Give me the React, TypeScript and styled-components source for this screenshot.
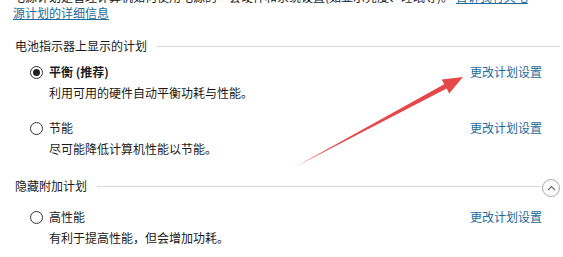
import React from "react";
import styled, { createGlobalStyle } from "styled-components";

const Global = createGlobalStyle`
  html, body { margin: 0; padding: 0; background: #fff; overflow: hidden; }
  body { font-family: "Noto Sans CJK SC", "Noto Sans", sans-serif; font-size: 12px; color: #1a1a1a; }
`;

const Page = styled.div`
  position: relative;
  width: 563px;
  height: 257px;
  overflow: hidden;
`;

const Intro = styled.p`
  margin: -11px 0 0 0;
  padding: 0 0 0 13px;
  line-height: 16px;
  width: 560px;
  white-space: nowrap;
`;

const Link = styled.a<{ $underline?: boolean }>`
  color: #1d6b9a;
  text-decoration: ${(p) => (p.$underline ? "underline" : "none")};
  cursor: pointer;
`;

const Section = styled.section<{ $top: number }>`
  margin-top: ${(p) => p.$top}px;
`;

const Header = styled.div`
  display: flex;
  align-items: center;
  gap: 10px;
  padding-left: 15px;
  padding-right: 3px;
  line-height: 16px;
  height: 16px;
`;

const Rule = styled.div`
  flex: 1;
  height: 1px;
  background: #d9d9d9;
`;

const CollapseButton = styled.div`
  width: 16px;
  height: 16px;
  border: 1px solid #a8a8a8;
  border-radius: 50%;
  display: flex;
  align-items: center;
  justify-content: center;
  margin-left: -9px;
  margin-top: 3px;
  flex-shrink: 0;
`;

const Plan = styled.div<{ $top: number }>`
  margin-top: ${(p) => p.$top}px;
`;

const PlanRow = styled.div`
  display: grid;
  grid-template-columns: 19px 1fr auto;
  align-items: center;
  padding-left: 30px;
  padding-right: 21px;
  line-height: 16px;
  height: 16px;
`;

const Radio = styled.span<{ $checked?: boolean }>`
  width: 11px;
  height: 11px;
  border: 1px solid #333;
  border-radius: 50%;
  display: flex;
  align-items: center;
  justify-content: center;
  &::after {
    content: "";
    width: 7px;
    height: 7px;
    border-radius: 50%;
    background: #222;
    display: ${(p) => (p.$checked ? "block" : "none")};
  }
`;

const PlanName = styled.span<{ $bold?: boolean }>`
  font-weight: ${(p) => (p.$bold ? 700 : 400)};
`;

const Desc = styled.div`
  padding-left: 49px;
  margin-top: 5px;
  line-height: 16px;
`;

const ArrowLayer = styled.svg`
  position: absolute;
  left: 0;
  top: 0;
  pointer-events: none;
`;

export default function App() {
  return (
    <Page>
      <Global />
      <Intro>
        电源计划是管理计算机如何使用电源的一套硬件和系统设置(如显示亮度、睡眠等)。 <Link $underline>告诉我有关电</Link>
        <br />
        <Link $underline>源计划的详细信息</Link>
      </Intro>

      <Section $top={17}>
        <Header>
          电池指示器上显示的计划
          <Rule />
        </Header>
        <Plan $top={10}>
          <PlanRow>
            <Radio $checked />
            <PlanName $bold>平衡 (推荐)</PlanName>
            <Link>更改计划设置</Link>
          </PlanRow>
          <Desc>利用可用的硬件自动平衡功耗与性能。</Desc>
        </Plan>
        <Plan $top={19}>
          <PlanRow>
            <Radio />
            <PlanName>节能</PlanName>
            <Link>更改计划设置</Link>
          </PlanRow>
          <Desc>尽可能降低计算机性能以节能。</Desc>
        </Plan>
      </Section>

      <Section $top={21}>
        <Header>
          隐藏附加计划
          <Rule />
          <CollapseButton>
            <svg width="9" height="6" viewBox="0 0 9 6">
              <path d="M1 5 L4.5 1.5 L8 5" fill="none" stroke="#666" strokeWidth="1.1" />
            </svg>
          </CollapseButton>
        </Header>
        <Plan $top={15}>
          <PlanRow>
            <Radio />
            <PlanName>高性能</PlanName>
            <Link>更改计划设置</Link>
          </PlanRow>
          <Desc>有利于提高性能，但会增加功耗。</Desc>
        </Plan>
      </Section>

      <ArrowLayer width="563" height="257" viewBox="0 0 563 257">
        <polygon
          points="295,167 444.2,84.2 441.6,79.4 463,77 449.2,93.4 446.6,88.6"
          fill="#e5484a"
        />
      </ArrowLayer>
    </Page>
  );
}
